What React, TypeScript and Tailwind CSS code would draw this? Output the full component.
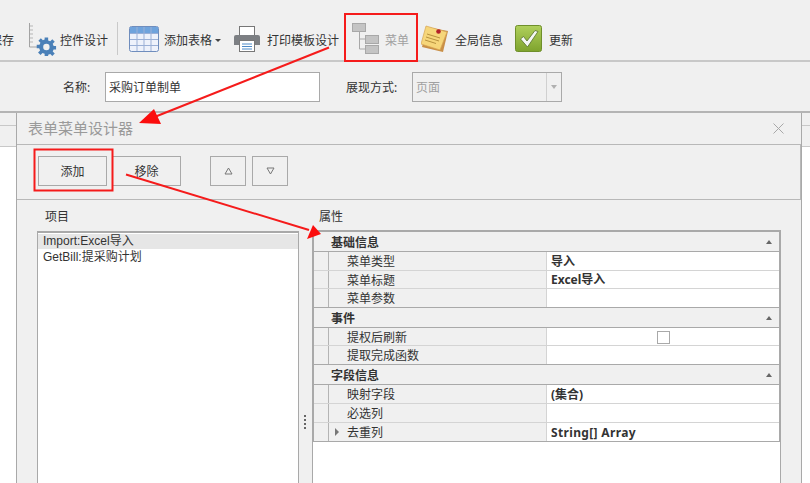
import * as React from "react"

const font = { fontFamily: '"Noto Sans", "Noto Sans CJK SC", sans-serif' }

function RulerIcon() {
  return (
    <svg width="30" height="34" viewBox="0 0 30 34" className="block">
      <path d="M1.5 1V25H11" fill="none" stroke="#a3a3a3" />
      <path d="M2 4H5M2 8H5M2 12H5M2 16H5M2 20H5" stroke="#b5b5b5" />
      <g fill="#4a80b8">
        <path d="M18 14h4v3.2l2.4 1 2.3-2.3 2.8 2.8-2.3 2.3 1 2.4H31v4h-2.8l-1 2.4 2.3 2.3-2.8 2.8-2.3-2.3-2.4 1V35h-4v-2.6l-2.4-1-2.3 2.3-2.8-2.8 2.3-2.3-1-2.4H9v-4h3.2l1-2.4-2.3-2.3 2.8-2.8 2.3 2.3 2-1z" transform="translate(0.8 3.3) scale(0.88)" />
      </g>
      <circle cx="18.4" cy="25" r="3.2" fill="#f0f0f0" />
    </svg>
  )
}

function TableIcon() {
  return (
    <svg width="30" height="26" viewBox="0 0 30 26" className="block">
      <rect x="0.5" y="0.5" width="29" height="25" rx="2" fill="#eef2fb" stroke="#6f8dbd" />
      <rect x="1" y="1" width="28" height="6.5" fill="#6fa3dc" />
      <path d="M1 7.5H29M1 13.5H29M1 19.5H29M8 1V25M15 1V25M22 1V25" stroke="#9bb0d6" />
    </svg>
  )
}

function PrinterIcon() {
  return (
    <svg width="26" height="26" viewBox="0 0 26 26" className="block">
      <rect x="5.5" y="0.5" width="15" height="9" fill="#fff" stroke="#777" />
      <path d="M2 9H24a2 2 0 0 1 2 2V19H0V11a2 2 0 0 1 2-2z" fill="#7c7f83" />
      <rect x="5.5" y="14.5" width="15" height="11" fill="#fff" stroke="#777" />
      <path d="M8 18H18M8 20.5H18M8 23H18" stroke="#4d8ac7" />
    </svg>
  )
}

function TreeIcon() {
  return (
    <svg width="27" height="31" viewBox="0 0 27 31" className="block">
      <path d="M7.5 9V26H13M7.5 16H13" fill="none" stroke="#a8a8a8" />
      <rect x="0.5" y="0.5" width="13" height="8" fill="#c4c4c4" stroke="#a8a8a8" />
      <rect x="13.5" y="12.5" width="13" height="8" fill="#c4c4c4" stroke="#a8a8a8" />
      <rect x="13.5" y="22.5" width="13" height="8" fill="#c4c4c4" stroke="#a8a8a8" />
    </svg>
  )
}

function NoteIcon() {
  return (
    <svg width="28" height="28" viewBox="0 0 28 28" className="block">
      <path d="M6 2L27 6L22 27L1 22z" fill="#c98f47" />
      <path d="M5 1L26 7L19 25L0 19z" fill="#f6d67a" stroke="#d7a552" strokeWidth="0.7" />
      <path d="M6 9L19 13M5 12L18 16M4 15L15 18.5" stroke="#b8923f" />
      <circle cx="17.5" cy="6.5" r="2.3" fill="#b3202a" />
    </svg>
  )
}

function CheckIcon() {
  return (
    <svg width="27" height="27" viewBox="0 0 27 27" className="block">
      <defs>
        <linearGradient id="chk" x1="0" y1="0" x2="0" y2="1">
          <stop offset="0" stopColor="#b0d05c" />
          <stop offset="1" stopColor="#7ea32d" />
        </linearGradient>
      </defs>
      <rect x="0.5" y="0.5" width="26" height="26" rx="2" fill="url(#chk)" stroke="#6f8f2b" />
      <path d="M5.5 14L8.5 11.5L12 16L20 5.5L23 6.5L12.5 22z" fill="#f4f7f4" stroke="#55702b" strokeWidth="0.8" />
    </svg>
  )
}

function ToolItem({ icon, label, className = "", dim = false }: { icon: React.ReactNode; label: string; className?: string; dim?: boolean }) {
  return (
    <div className={`flex items-center ${className}`}>
      <div className="-translate-y-[2px]">{icon}</div>
      <span className={`whitespace-nowrap text-xs ${dim ? "text-[#a0a0a0]" : "text-[#333]"}`}>{label}</span>
    </div>
  )
}

function Toolbar() {
  return (
    <div className="flex h-[62px] items-center overflow-hidden border-b-2 border-[#c8c8c8] pt-[21px]">
      <span className="-ml-[10px] whitespace-nowrap text-xs text-[#333]">保存</span>
      <ToolItem className="ml-[14px] gap-[2px]" icon={<RulerIcon />} label="控件设计" />
      <div className="ml-[9px] h-[33px] w-px -translate-y-[2px] bg-[#c9c9c9]" />
      <ToolItem className="ml-[11px] gap-[5px]" icon={<TableIcon />} label="添加表格" />
      <div className="ml-[3px] h-0 w-0 border-x-[3px] border-t-[3px] border-x-transparent border-t-[#444]" />
      <ToolItem className="ml-[13px] gap-[7px]" icon={<PrinterIcon />} label="打印模板设计" />
      <ToolItem className="ml-[13px] gap-[6px]" dim icon={<TreeIcon />} label="菜单" />
      <ToolItem className="ml-[12px] gap-[6px]" icon={<NoteIcon />} label="全局信息" />
      <ToolItem className="ml-[12px] gap-[7px]" icon={<CheckIcon />} label="更新" />
    </div>
  )
}

function FormRow() {
  return (
    <div className="flex h-[51px] items-center border-b-2 border-[#b4b4b4] text-xs text-[#333]">
      <span className="ml-[63px] w-[42px] pt-[2px]">名称:</span>
      <div className="flex h-[30px] w-[215px] items-center border border-[#a9a9a9] bg-white pl-[3px] pt-[2px]">采购订单制单</div>
      <span className="ml-[26px] w-[66px] pt-[2px]">展现方式:</span>
      <div className="flex h-[30px] w-[150px] items-center border border-[#a9a9a9] pl-[3px] text-[#a0a0a0]">
        <span className="flex-1 pt-[2px]">页面</span>
        <div className="flex h-full w-[15px] items-center justify-center border-l border-[#d0d0d0]">
          <div className="h-0 w-0 border-x-[3.5px] border-t-[4px] border-x-transparent border-t-[#b0b0b0]" />
        </div>
      </div>
    </div>
  )
}

function DialogButton({ className = "", children }: { className?: string; children: React.ReactNode }) {
  return (
    <div className={`flex h-[30px] items-center justify-center border border-[#a9a9a9] text-xs text-[#333] ${className}`}>
      {children}
    </div>
  )
}

function Category({ label }: { label: string }) {
  return (
    <div className="flex h-5 items-center justify-between border-b border-[#a9a9a9] pl-[17px] pr-[7px] pt-[2px] text-xs font-bold text-[#333]">
      <span>{label}</span>
      <div className="-translate-y-px h-0 w-0 border-x-[3.5px] border-b-[4px] border-x-transparent border-b-[#666]" />
    </div>
  )
}

function PropRow({ name, value, expand = false, check = false, end = false, short = false, wide = false }: { name: string; value?: string; expand?: boolean; check?: boolean; end?: boolean; short?: boolean; wide?: boolean }) {
  return (
    <div className={`flex border-b text-xs text-[#333] ${short ? "h-[18px]" : "h-[19px]"} ${end ? "border-[#a9a9a9]" : "border-[#d4d4d4]"}`}>
      <div className="w-[15px] border-r border-[#b4b4b4]" />
      <div className="relative flex w-[218px] items-center border-r border-[#d4d4d4] pl-[18px] pt-[2px]">
        {expand && (
          <div className="absolute left-[6px] top-[5px] h-0 w-0 border-y-[4px] border-l-[4px] border-y-transparent border-l-[#777]" />
        )}
        {name}
      </div>
      <div className={`flex flex-1 items-center bg-white pl-[4px] pt-px font-bold ${wide ? "tracking-[0.35px]" : ""}`}>
        {check ? <div className="ml-[106px] h-[13px] w-[13px] border border-[#a9a9a9]" /> : value}
      </div>
    </div>
  )
}

function PropertyGrid() {
  return (
    <div className="border-x border-t-2 border-[#a9a9a9]">
      <Category label="基础信息" />
      <PropRow name="菜单类型" value="导入" />
      <PropRow name="菜单标题" value="Excel导入" short />
      <PropRow name="菜单参数" end />
      <Category label="事件" />
      <PropRow name="提权后刷新" check short />
      <PropRow name="提取完成函数" end />
      <Category label="字段信息" />
      <PropRow name="映射字段" value="(集合)" />
      <PropRow name="必选列" />
      <PropRow name="去重列" value="String[] Array" expand end wide />
    </div>
  )
}

function Dialog() {
  return (
    <div className="flex h-full w-[786px] flex-col overflow-hidden border-x border-[#a9a9a9] text-[#333]">
      <div className="flex h-[31px] shrink-0 items-center justify-between pl-[11px] pr-[17px]">
        <span className="text-[15px] text-[#9a9a9a]">表单菜单设计器</span>
        <svg width="11" height="11" viewBox="0 0 11 11">
          <path d="M0.5 0.5L10.5 10.5M10.5 0.5L0.5 10.5" stroke="#a8a8a8" />
        </svg>
      </div>
      <div className="flex h-[56px] shrink-0 items-center border-y border-r border-[#b8b8b8] pb-[2px] pl-[21px]">
        <DialogButton className="w-[69px] pt-px">添加</DialogButton>
        <DialogButton className="ml-[5px] w-[69px] pt-px">移除</DialogButton>
        <DialogButton className="ml-[29px] w-[36px]">
          <svg width="9" height="8" viewBox="0 0 9 8">
            <path d="M4.5 1L8 7H1z" fill="none" stroke="#777" />
          </svg>
        </DialogButton>
        <DialogButton className="ml-[6px] w-[36px]">
          <svg width="9" height="8" viewBox="0 0 9 8">
            <path d="M4.5 7L8 1H1z" fill="none" stroke="#777" />
          </svg>
        </DialogButton>
      </div>
      <div className="flex min-h-0 flex-1 pl-[20px]">
        <div className="flex w-[262px] shrink-0 flex-col">
          <div className="h-[31px] shrink-0 pl-[8px] pt-[9px] text-xs leading-4">项目</div>
          <div className="flex-1 border-x border-t-2 border-[#a9a9a9] bg-white pt-px font-['Liberation_Sans','Noto_Sans_CJK_SC',sans-serif] text-xs">
            <div className="h-[15px] bg-[#e6e6e6] pl-[5px] leading-[14px]">Import:Excel导入</div>
            <div className="h-[16px] pl-[5px] leading-[16px]">GetBill:提采购计划</div>
          </div>
        </div>
        <div className="relative w-[13px] shrink-0">
          <div className="absolute left-[5px] top-[215px] flex flex-col gap-[2px]">
            <div className="h-[2px] w-[2px] bg-[#666]" />
            <div className="h-[2px] w-[2px] bg-[#666]" />
            <div className="h-[2px] w-[2px] bg-[#666]" />
            <div className="h-[2px] w-[2px] bg-[#666]" />
          </div>
        </div>
        <div className="flex w-[469px] shrink-0 flex-col">
          <div className="h-[30px] shrink-0 pl-[7px] pt-[9px] text-xs leading-4">属性</div>
          <div className="flex-1 border-x border-[#a9a9a9] bg-white">
            <div className="bg-[#f0f0f0]">
              <PropertyGrid />
            </div>
          </div>
        </div>
      </div>
    </div>
  )
}

function SideStrip({ className = "" }: { className?: string }) {
  return (
    <div className={`flex h-full flex-col bg-white ${className}`}>
      <div className="h-[13px] border-b border-[#c8c8c8] bg-[#f0f0f0]" />
      <div className="h-[21px] border-b border-[#c8c8c8] bg-[#f0f0f0]" />
    </div>
  )
}

function Annotations() {
  return (
    <svg width="810" height="483" viewBox="0 0 810 483" className="pointer-events-none absolute left-0 top-0">
      <g fill="none" stroke="#f51b1b">
        <rect x="345" y="14" width="72" height="47" strokeWidth="2" />
        <rect x="34.5" y="149.5" width="78" height="41" strokeWidth="2" />
        <path d="M329 47.5L152 118" strokeWidth="2" />
        <path d="M126 174.5L309 230" strokeWidth="2" />
      </g>
      <polygon points="139,123 154,109 161,124" fill="#fb0d0d" />
      <polygon points="321,234 313,225 307,239" fill="#fb0d0d" />
    </svg>
  )
}

export default function App() {
  return (
    <div className="relative h-[483px] w-[810px] overflow-hidden bg-[#f0f0f0]" style={font}>
      <Toolbar />
      <FormRow />
      <div className="flex h-[370px]">
        <SideStrip className="w-[16px]" />
        <Dialog />
        <SideStrip className="flex-1" />
      </div>
      <Annotations />
    </div>
  )
}
